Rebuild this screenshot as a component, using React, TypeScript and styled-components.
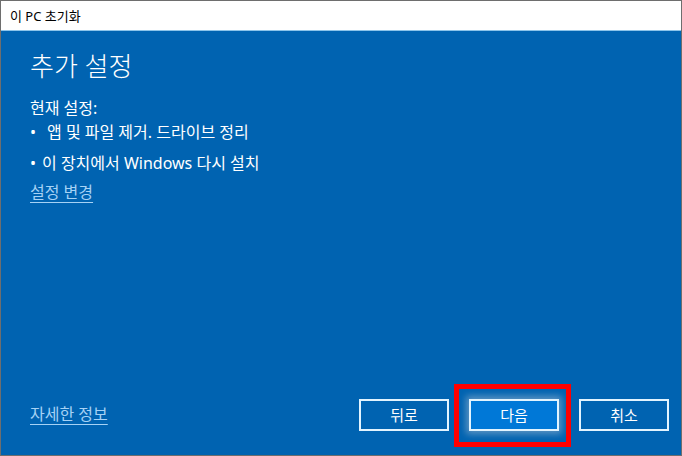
import React from "react"
import styled, { createGlobalStyle } from "styled-components"

const GlobalStyle = createGlobalStyle`
  html, body {
    margin: 0;
    padding: 0;
    background: #ffffff;
  }
  body {
    font-family: "Noto Sans", "Noto Sans CJK KR", sans-serif;
  }
`

const Window = styled.div`
  width: 682px;
  height: 456px;
  box-sizing: border-box;
  border: 1px solid #6e6e6e;
  display: flex;
  flex-direction: column;
  background: #0063b1;
`

const TitleBar = styled.div`
  height: 29px;
  flex: none;
  background: #ffffff;
  border-bottom: 1px solid #8cc4ea;
  display: flex;
  align-items: center;
  padding-left: 9px;
  font-size: 13px;
  color: #000000;
`

const Body = styled.div`
  flex: 1;
  display: flex;
  flex-direction: column;
  padding: 17px 12px 24px 29px;
  color: #ffffff;
`

const Heading = styled.h1`
  margin: 0 0 13px;
  font-size: 26px;
  font-weight: 300;
  line-height: 36px;
`

const Label = styled.div`
  font-size: 16px;
  line-height: 22px;
  margin-bottom: 2px;
`

const List = styled.ul`
  list-style: none;
  margin: 0;
  padding: 0;
  display: flex;
  flex-direction: column;
  gap: 9px;
`

const Item = styled.li<{ $indent: number }>`
  font-size: 16px;
  line-height: 22px;
  display: flex;

  &::before {
    content: "•";
    width: ${p => p.$indent}px;
    flex: none;
  }
`

const Link = styled.a<{ $gap?: number }>`
  color: #a6d2f5;
  font-size: 16px;
  line-height: 22px;
  text-decoration: underline;
  text-underline-offset: 4px;
  align-self: flex-start;
  margin-top: ${p => p.$gap ?? 0}px;
  cursor: pointer;
`

const Spacer = styled.div`
  flex: 1;
`

const Footer = styled.div`
  display: flex;
  align-items: center;
`

const Buttons = styled.div`
  margin-left: auto;
  display: flex;
  gap: 20px;
`

const Button = styled.button<{ $primary?: boolean }>`
  width: 90px;
  height: 32px;
  box-sizing: border-box;
  border: 2px solid #e2f4ff;
  background: ${p => (p.$primary ? "#0078d7" : "transparent")};
  box-shadow: ${p => (p.$primary ? "0 0 7px 3px rgba(170, 190, 210, 0.55)" : "none")};
  color: #ffffff;
  font-family: inherit;
  font-size: 15px;
  padding: 0 0 1px;
`

const Marked = styled.div`
  position: relative;
  display: flex;
`

const RedFrame = styled.span`
  position: absolute;
  left: -15px;
  top: -15px;
  right: -12px;
  bottom: -16px;
  border: 5px solid #ff0000;
  pointer-events: none;
`

export default function App() {
  return (
    <>
      <GlobalStyle />
      <Window>
        <TitleBar>이 PC 초기화</TitleBar>
        <Body>
          <Heading>추가 설정</Heading>
          <Label>현재 설정:</Label>
          <List>
            <Item $indent={17}>앱 및 파일 제거. 드라이브 정리</Item>
            <Item $indent={12}>이 장치에서 Windows 다시 설치</Item>
          </List>
          <Link $gap={7}>설정 변경</Link>
          <Spacer />
          <Footer>
            <Link $gap={4}>자세한 정보</Link>
            <Buttons>
              <Button>뒤로</Button>
              <Marked>
                <Button $primary>다음</Button>
                <RedFrame />
              </Marked>
              <Button>취소</Button>
            </Buttons>
          </Footer>
        </Body>
      </Window>
    </>
  )
}
